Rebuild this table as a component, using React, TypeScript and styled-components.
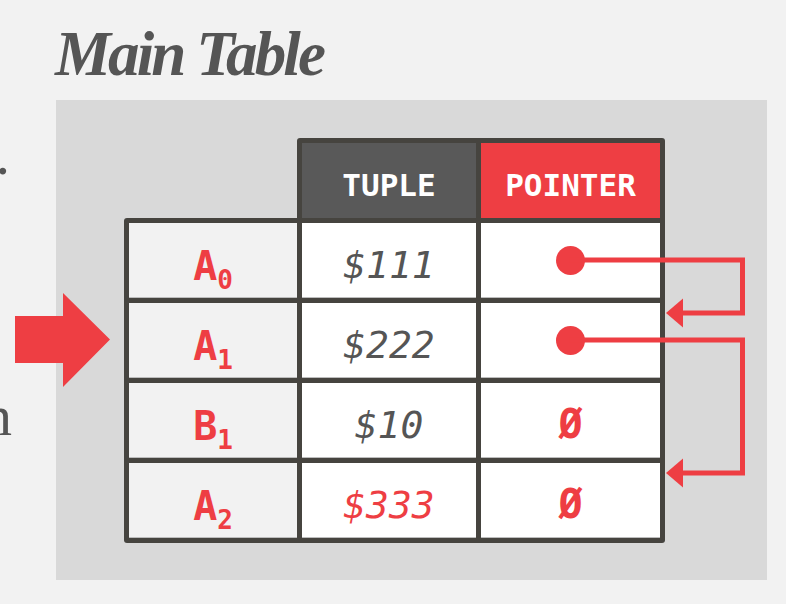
import React from "react";
import styled, { createGlobalStyle } from "styled-components";

const RED = "#ee3e43";
const INK = "#46443f";
const TEXT = "#555555";

const Global = createGlobalStyle`
  html, body { margin: 0; padding: 0; background: #f2f2f2; }
  body { width: 786px; height: 604px; overflow: hidden; }
`;

const Page = styled.div`
  width: 786px;
  height: 604px;
  background: #f2f2f2;
  display: flex;
  flex-direction: column;
  overflow: hidden;
`;

const Title = styled.h1`
  margin: 23px 0 0 55px;
  height: 63px;
  font-family: "Liberation Serif", serif;
  font-style: italic;
  font-weight: 700;
  font-size: 63px;
  line-height: 63px;
  letter-spacing: -2.9px;
  color: ${TEXT};
  white-space: nowrap;
`;

const Stage = styled.div`
  position: relative;
  display: flex;
  margin-top: 14px;
  height: 480px;
`;

const Margin = styled.div`
  width: 56px;
  flex: none;
  overflow: hidden;
  display: flex;
  flex-direction: column;
  align-items: flex-end;
  font-family: "Liberation Serif", serif;
  font-size: 58px;
  line-height: 58px;
  color: ${TEXT};
`;

const Fragment = styled.div<{ $top: number; $right: number }>`
  margin-top: ${(p) => p.$top}px;
  margin-right: ${(p) => p.$right}px;
  white-space: nowrap;
`;

const Panel = styled.div`
  position: relative;
  flex: none;
  width: 711px;
  height: 480px;
  box-sizing: border-box;
  padding: 38px 0 0 68px;
  background: #d9d9d9;
`;

const Table = styled.div`
  display: flex;
  flex-direction: column;
  width: 541px;
`;

const HeadRow = styled.div`
  display: flex;
`;

const Corner = styled.div`
  width: 173px;
  flex: none;
`;

const HeadFrame = styled.div`
  display: flex;
  gap: 5px;
  padding: 5px 5px 0 5px;
  background: ${INK};
  border-radius: 3px 3px 0 0;
`;

const HeadCell = styled.div<{ $bg: string; $w: number }>`
  width: ${(p) => p.$w}px;
  height: 75px;
  box-sizing: border-box;
  padding-top: 9px;
  display: flex;
  align-items: center;
  justify-content: center;
  background: ${(p) => p.$bg};
  color: #ffffff;
  font-family: "DejaVu Sans Mono", monospace;
  font-weight: 700;
  font-size: 31px;
  line-height: 1;
`;

const Body = styled.div`
  display: grid;
  grid-template-columns: 168px 174px 179px;
  grid-auto-rows: 75px;
  gap: 5px;
  padding: 5px;
  background: ${INK};
  border-radius: 3px 0 3px 3px;
`;

const Cell = styled.div<{ $bg: string; $pad: number }>`
  box-sizing: border-box;
  padding-top: ${(p) => p.$pad}px;
  display: flex;
  align-items: center;
  justify-content: center;
  background: ${(p) => p.$bg};
  box-shadow: inset 0 -1px 0 #bdbdbd;
`;

const Key = styled.span`
  font-family: "DejaVu Sans Mono", monospace;
  font-weight: 700;
  font-size: 40px;
  line-height: 1;
  color: ${RED};
  white-space: nowrap;
`;

const Sub = styled.span`
  position: relative;
  top: 9px;
  font-size: 26px;
`;

const Value = styled.span<{ $color: string }>`
  font-family: "DejaVu Sans Mono", monospace;
  font-style: italic;
  font-size: 38px;
  line-height: 1;
  color: ${(p) => p.$color};
  white-space: nowrap;
`;

const Null = styled.span`
  font-family: "DejaVu Sans Mono", monospace;
  font-weight: 700;
  font-size: 40px;
  line-height: 1;
  color: ${RED};
`;

const Dot = styled.span`
  width: 29px;
  height: 29px;
  border-radius: 50%;
  background: ${RED};
`;

const Overlay = styled.svg`
  position: absolute;
  left: 0;
  top: 0;
  pointer-events: none;
`;

type Row = {
  key: string;
  sub: string;
  value: string;
  valueColor: string;
  pointer: "dot" | "null";
};

const rows: Row[] = [
  { key: "A", sub: "0", value: "$111", valueColor: TEXT, pointer: "dot" },
  { key: "A", sub: "1", value: "$222", valueColor: TEXT, pointer: "dot" },
  { key: "B", sub: "1", value: "$10", valueColor: TEXT, pointer: "null" },
  { key: "A", sub: "2", value: "$333", valueColor: RED, pointer: "null" },
];

export default function App() {
  return (
    <Page>
      <Global />
      <Title>Main Table</Title>
      <Stage>
        <Margin>
          <Fragment $top={26} $right={46}>.</Fragment>
          <Fragment $top={203} $right={44}>n</Fragment>
        </Margin>
        <Panel>
          <Table>
            <HeadRow>
              <Corner />
              <HeadFrame>
                <HeadCell $bg="#595959" $w={174}>TUPLE</HeadCell>
                <HeadCell $bg={RED} $w={179}>POINTER</HeadCell>
              </HeadFrame>
            </HeadRow>
            <Body>
              {rows.map((r, i) => (
                <React.Fragment key={i}>
                  <Cell $bg="#f2f2f2" $pad={11}>
                    <Key>
                      {r.key}
                      <Sub>{r.sub}</Sub>
                    </Key>
                  </Cell>
                  <Cell $bg="#ffffff" $pad={8}>
                    <Value $color={r.valueColor}>{r.value}</Value>
                  </Cell>
                  <Cell $bg="#ffffff" $pad={r.pointer === "dot" ? 0 : 7}>
                    {r.pointer === "dot" ? <Dot /> : <Null>Ø</Null>}
                  </Cell>
                </React.Fragment>
              ))}
            </Body>
          </Table>
          <Overlay width={711} height={480} viewBox="0 0 711 480">
            <g fill="none" stroke={RED} strokeWidth={5} strokeLinejoin="miter">
              <path d="M513.5 160 H686.5 V213 H624" />
              <path d="M513.5 240 H686.5 V373 H624" />
            </g>
            <g fill={RED}>
              <polygon points="610,213 627,198.5 627,227.5" />
              <polygon points="610,373 627,358.5 627,387.5" />
            </g>
          </Overlay>
        </Panel>
        <Overlay width={120} height={480} viewBox="0 0 120 480">
          <polygon
            fill={RED}
            points="15,216 63,216 63,193 110,239.5 63,287 63,263 15,263"
          />
        </Overlay>
      </Stage>
    </Page>
  );
}
